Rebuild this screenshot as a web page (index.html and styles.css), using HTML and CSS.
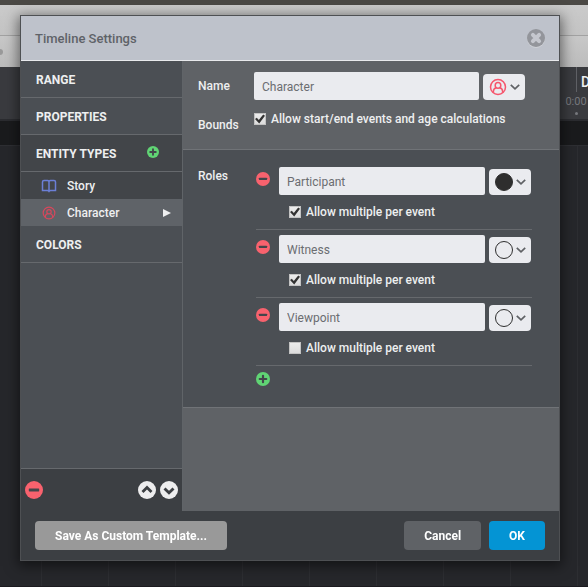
FILE: index.html
```html
<!DOCTYPE html>
<html lang="en">
<head>
<meta charset="utf-8">
<title>Timeline Settings</title>
<link rel="stylesheet" href="styles.css">
</head>
<body>
<svg class="sprite" width="0" height="0" aria-hidden="true">
  <symbol id="person" viewBox="0 0 18 18">
    <g fill="none" stroke="currentColor" stroke-width="1.5">
      <circle cx="9" cy="9" r="7.5"/>
      <circle cx="9" cy="7.4" r="2.8"/>
      <path d="M4.400 14.600V13.200q0-2.700 3-3.400M13.600 14.600V13.200q0-2.700-3-3.400"/>
    </g>
  </symbol>
  <symbol id="book" viewBox="0 0 16 14">
    <path fill="none" stroke="currentColor" stroke-width="1.5" d="M8 2.500V12M8 2.500Q7.500 1.500 6.500 1.500H3Q1.500 1.500 1.500 3V11.500H6.500Q7.500 11.500 8 12.300Q8.500 11.500 9.500 11.500H14.500V3Q14.500 1.500 13 1.500H9.500Q8.500 1.500 8 2.500"/>
  </symbol>
  <symbol id="minus" viewBox="0 0 18 18">
    <circle cx="9" cy="9" r="9" fill="#f8626e"/>
    <rect x="3.800" y="7.500" width="10.400" height="2.900" rx=".6" fill="#43464b"/>
  </symbol>
  <symbol id="plus" viewBox="0 0 18 18">
    <circle cx="9" cy="9" r="9" fill="#60d474"/>
    <path d="M9 4.800v8.400M4.800 9h8.400" stroke="#43464b" stroke-width="2.800" stroke-linecap="round"/>
  </symbol>
  <symbol id="up" viewBox="0 0 18 18">
    <circle cx="9" cy="9" r="9" fill="#ededee"/>
    <path d="M4.500 10.900L9 6.500l4.500 4.400" fill="none" stroke="#3c3f43" stroke-width="2.800"/>
  </symbol>
  <symbol id="down" viewBox="0 0 18 18">
    <circle cx="9" cy="9" r="9" fill="#ededee"/>
    <path d="M4.500 7.400L9 11.800l4.500-4.400" fill="none" stroke="#3c3f43" stroke-width="2.800"/>
  </symbol>
  <symbol id="chevron" viewBox="0 0 10 6">
    <path d="M.8.800L5 4.800 9.200.8" fill="none" stroke="#5f6165" stroke-width="1.700"/>
  </symbol>
</svg>

<div class="app">
  <div class="app-title"></div>
  <div class="app-bar"></div>
  <div class="app-tools"><span class="knob"></span></div>
  <div class="ruler">
    <div class="tick"><span class="day">D</span><span class="time">0:00</span><span class="dot"></span></div>
  </div>
  <div class="band"></div>
  <div class="canvas"></div>
</div>

<div class="overlay">
  <form class="dialog" role="dialog" aria-labelledby="title">
    <header class="head">
      <h1 id="title">Timeline Settings</h1>
      <button type="button" class="icon-btn" aria-label="Close">
        <svg width="20" height="20" viewBox="0 0 20 20"><circle cx="10" cy="11" r="9" fill="#cfd1d6"/><circle cx="10" cy="10" r="9" fill="#93959b"/><path d="M6.900 6.900l6.200 6.200M13.100 6.900l-6.200 6.200" stroke="#c5c7ce" stroke-width="4" stroke-linecap="round"/></svg>
      </button>
    </header>

    <div class="body">
      <nav class="side">
        <a class="nav" href="#range">RANGE</a>
        <a class="nav" href="#properties">PROPERTIES</a>
        <div class="group">
          <div class="nav"><a href="#entities">ENTITY TYPES</a>
            <button type="button" class="icon-btn" aria-label="Add entity type"><svg width="12" height="12"><use href="#plus"/></svg></button>
          </div>
          <a class="item" href="#story"><svg class="story" width="16" height="14"><use href="#book"/></svg>Story</a>
          <a class="item current" href="#character"><svg class="char" width="16" height="14" viewBox="0 0 16 14"><use href="#person" x="1" width="14" height="14"/></svg>Character<svg class="arrow" width="8" height="8" viewBox="0 0 8 8"><path d="M0 0l8 4-8 4z" fill="#eeeff0"/></svg></a>
        </div>
        <a class="nav" href="#colors">COLORS</a>
        <div class="side-foot">
          <button type="button" class="icon-btn remove" aria-label="Remove"><svg width="18" height="18"><use href="#minus"/></svg></button>
          <button type="button" class="icon-btn" aria-label="Move up"><svg width="18" height="18"><use href="#up"/></svg></button>
          <button type="button" class="icon-btn" aria-label="Move down"><svg width="18" height="18"><use href="#down"/></svg></button>
        </div>
      </nav>

      <main class="main">
        <section class="general">
          <label class="name" for="name">Name</label>
          <div class="field">
            <input class="text" id="name" type="text" value="Character">
            <button type="button" class="picker" aria-label="Icon"><svg class="char" width="18" height="18"><use href="#person"/></svg><svg width="10" height="6"><use href="#chevron"/></svg></button>
          </div>
          <span class="bounds">Bounds</span>
          <label class="check"><input type="checkbox" checked>Allow start/end events and age calculations</label>
        </section>

        <section class="roles">
          <h2>Roles</h2>
          <div class="role-list">
            <div class="role">
              <button type="button" class="icon-btn" aria-label="Remove role"><svg width="14" height="14"><use href="#minus"/></svg></button>
              <div class="field">
                <input class="text" type="text" value="Participant" aria-label="Role name">
                <button type="button" class="picker" aria-label="Marker"><span class="disc filled"></span><svg width="10" height="6"><use href="#chevron"/></svg></button>
              </div>
              <label class="check"><input type="checkbox" checked>Allow multiple per event</label>
            </div>
            <div class="role">
              <button type="button" class="icon-btn" aria-label="Remove role"><svg width="14" height="14"><use href="#minus"/></svg></button>
              <div class="field">
                <input class="text" type="text" value="Witness" aria-label="Role name">
                <button type="button" class="picker" aria-label="Marker"><span class="disc"></span><svg width="10" height="6"><use href="#chevron"/></svg></button>
              </div>
              <label class="check"><input type="checkbox" checked>Allow multiple per event</label>
            </div>
            <div class="role">
              <button type="button" class="icon-btn" aria-label="Remove role"><svg width="14" height="14"><use href="#minus"/></svg></button>
              <div class="field">
                <input class="text" type="text" value="Viewpoint" aria-label="Role name">
                <button type="button" class="picker" aria-label="Marker"><span class="disc"></span><svg width="10" height="6"><use href="#chevron"/></svg></button>
              </div>
              <label class="check"><input type="checkbox">Allow multiple per event</label>
            </div>
            <button type="button" class="icon-btn add-role" aria-label="Add role"><svg width="14" height="14"><use href="#plus"/></svg></button>
          </div>
        </section>
      </main>
    </div>

    <footer class="foot">
      <button type="button" class="btn template">Save As Custom Template...</button>
      <button type="button" class="btn">Cancel</button>
      <button type="submit" class="btn ok">OK</button>
    </footer>
  </form>
</div>
</body>
</html>
```
FILE: styles.css
```css
* {
  box-sizing: border-box;
}

body {
  margin: 0;
  height: 100vh;
  overflow: hidden;
  font: 500 12px/16px Roboto, "Liberation Sans", sans-serif;
  color: #eeeff0;
  background: #26272b;
}

.sprite {
  position: absolute;
}

h1,
h2 {
  margin: 0;
  font: inherit;
}

a {
  color: inherit;
  text-decoration: none;
}

svg {
  display: block;
  flex: none;
}

button,
input {
  font: inherit;
  border: 0;
}

/* Timeline window behind the dialog */
.app {
  display: flex;
  flex-direction: column;
  height: 100vh;
}

.app-title {
  height: 5px;
  background: #4b4945;
}

.app-bar {
  height: 31px;
  background: linear-gradient(#cacaca, #c4c4c4);
  border-bottom: 1px solid #a2a2a2;
}

.app-tools {
  display: flex;
  align-items: center;
  height: 31px;
  background: linear-gradient(#c8c8c8, #bcbcbc);
}

.app-tools .knob {
  width: 3px;
  height: 6px;
  border-radius: 0 3px 3px 0;
  background: #9a9a9a;
}

.ruler {
  display: flex;
  justify-content: flex-end;
  height: 54px;
  background: #3a3b3f;
  border-bottom: 2px solid #2b2c30;
}

.tick {
  display: grid;
  grid-template-rows: 25px 17px 10px;
  justify-items: center;
  width: 24px;
}

.day {
  justify-self: end;
  width: 12px;
  padding: 7px 0 0 4px;
  border-left: 1px solid #606166;
  font-size: 14px;
}

.time {
  padding-top: 2px;
  font-size: 11px;
  font-weight: 400;
  color: #77797e;
}

.dot {
  width: 3px;
  height: 3px;
  margin-top: 3px;
  border-radius: 50%;
  background: #77797e;
}

.band {
  height: 24px;
  background: #1a1b1d;
}

.canvas {
  flex: 1;
  border-top: 1px solid #2e2f33;
  border-bottom: 1px solid #1b1a1f;
  background: repeating-linear-gradient(90deg, #26272b 0 41px, #2d2e32 41px 42px, #26272b 42px 67px);
}

/* Dialog */
.overlay {
  position: fixed;
  inset: 0;
  padding: 15px 28px 26px 20px;
}

.dialog {
  display: flex;
  flex-direction: column;
  height: 100%;
  border: 1px solid #4e5053;
  background: #3c3f43;
  box-shadow: 0 3px 12px 2px rgba(0, 0, 0, 0.5);
}

.head {
  display: flex;
  align-items: center;
  justify-content: space-between;
  height: 45px;
  padding: 0 13px 0 14px;
  background: #bec2cb;
  border-bottom: 1px solid #e8e9ec;
  color: #5f6268;
  font-size: 13px;
}

.head h1 {
  padding-top: 2px;
}

.icon-btn {
  display: block;
  padding: 0;
  background: none;
}

.body {
  display: flex;
  flex: 1;
}

.side {
  display: flex;
  flex-direction: column;
  width: 162px;
  background: #4b4f54;
  border-right: 1px solid #606468;
}

.nav {
  display: flex;
  align-items: center;
  justify-content: space-between;
  height: 37px;
  padding: 1px 23px 0 15px;
  border-bottom: 1px solid #66696d;
  font-weight: 700;
}

.nav .icon-btn {
  padding-bottom: 4px;
}

.group {
  background: #424549;
}

.item {
  display: flex;
  align-items: center;
  gap: 10px;
  height: 27px;
  padding: 0 11px 0 20px;
}

.current {
  background: #5f6368;
}

.arrow {
  margin-left: auto;
}

.story {
  color: #6b7fd6;
}

.char {
  color: #f5556c;
}

.item .char {
  color: #d8475c;
}

.side-foot {
  display: flex;
  align-items: center;
  gap: 4px;
  height: 43px;
  margin-top: auto;
  padding: 0 4px;
  border-top: 1px solid #66696d;
  background: #3c3f43;
}

.side-foot .remove {
  margin-right: auto;
}

.main {
  flex: 1;
  background: #5f6266;
}

.general {
  display: grid;
  grid-template-columns: 56px 1fr;
  align-content: start;
  align-items: start;
  row-gap: 11px;
  height: 89px;
  padding: 11px 34px 0 15px;
  border-bottom: 1px solid #707377;
}

.name,
.bounds,
.roles h2 {
  padding-top: 6px;
}

.field {
  display: flex;
  align-items: flex-end;
  gap: 4px;
}

.text {
  flex: 1;
  min-width: 0;
  height: 28px;
  padding: 1px 8px 0;
  border-radius: 2px;
  background: #eaebef;
  color: #6b6d71;
  font-weight: 400;
}

.picker {
  display: flex;
  align-items: center;
  justify-content: space-between;
  width: 42px;
  height: 26px;
  padding: 0 5px 0 6px;
  border-radius: 4px;
  background: #eaebef;
}

.disc {
  width: 18px;
  height: 18px;
  border: 1px solid #2e2e2e;
  border-radius: 50%;
}

.filled {
  background: #2e2e2e;
}

.check {
  display: flex;
  align-items: center;
  gap: 5px;
  white-space: nowrap;
}

.check input {
  display: grid;
  place-items: center;
  flex: none;
  width: 12px;
  height: 12px;
  margin: 0;
  appearance: none;
  border: 1px solid #c3c3c3;
  background: linear-gradient(#ececec, #dcdcdc);
}

.check input:checked::before {
  content: "";
  width: 10px;
  height: 10px;
  background: #333;
  clip-path: polygon(0 50%, 18% 38%, 38% 60%, 82% 6%, 100% 18%, 42% 94%);
}

.roles {
  display: grid;
  grid-template-columns: 58px 1fr;
  padding: 12px 27px 21px 15px;
  background: #4b4f54;
  border-bottom: 1px solid #707377;
}

.role {
  display: grid;
  grid-template-columns: 23px 1fr;
  align-content: start;
  row-gap: 9px;
  height: 68px;
  padding: 5px 1px 0 0;
  border-bottom: 1px solid #66696d;
}

.role > .icon-btn {
  padding-bottom: 4px;
}

.role .check {
  grid-column: 2;
  padding-left: 10px;
}

.add-role {
  margin-top: 6px;
}

.foot {
  display: flex;
  gap: 8px;
  padding: 10px 14px;
}

.btn {
  height: 29px;
  padding: 0 20px;
  border-radius: 4px;
  background: #5f6266;
  color: #fff;
  font-weight: 700;
}

.template {
  margin-right: auto;
  background: #999;
}

.ok {
  background: #0494d4;
}
```
